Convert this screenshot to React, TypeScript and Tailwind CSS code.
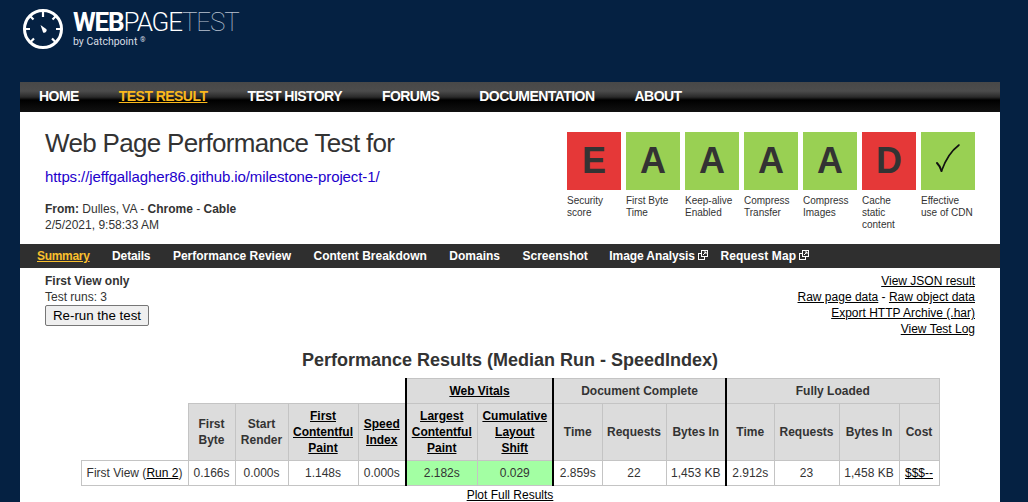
import { ReactNode } from 'react';

const grades = [
  { grade: 'E', label: ['Security', 'score'], color: 'bg-[#e53838]' },
  { grade: 'A', label: ['First Byte', 'Time'], color: 'bg-[#99d053]' },
  { grade: 'A', label: ['Keep-alive', 'Enabled'], color: 'bg-[#99d053]' },
  { grade: 'A', label: ['Compress', 'Transfer'], color: 'bg-[#99d053]' },
  { grade: 'A', label: ['Compress', 'Images'], color: 'bg-[#99d053]' },
  { grade: 'D', label: ['Cache', 'static', 'content'], color: 'bg-[#e53838]' },
  { grade: '✓', label: ['Effective', 'use of CDN'], color: 'bg-[#99d053]' },
];

function ExternalIcon() {
  return (
    <svg width="10" height="10" viewBox="0 0 10 10" fill="none" stroke="white" strokeWidth="1" className="ml-[3px] mb-[3px]">
      <rect x="0.5" y="3.5" width="6" height="6" />
      <rect x="3.5" y="0.5" width="6" height="6" fill="#2f2f2f" />
      <path d="M5 5 L8 2 M6 2 H8 V4" />
    </svg>
  );
}

function Gauge() {
  return (
    <svg width="42" height="42" viewBox="0 0 42 42" fill="none" stroke="white" strokeWidth="3">
      <circle cx="21" cy="21" r="18.5" />
      <path strokeWidth="2.2" d="M21 3v6M8 8l3.5 3.5M34 8l-3.5 3.5M3 21h5M34 21h5M8.5 34l3.5-3.5M33.5 34L30 30.5" />
      <path stroke="none" fill="white" d="M18.500 17l6 4.200a2.500 2.500 0 0 1-3.400 3.200z" />
    </svg>
  );
}

function Th({ children, className = '' }: { children: ReactNode; className?: string }) {
  return <th className={`border border-[#c4c4c4] bg-[#dcdcdc] p-0 text-center font-bold ${className}`}>{children}</th>;
}

function Td({ children, className = '' }: { children: ReactNode; className?: string }) {
  return <td className={`border border-[#c4c4c4] p-0 text-center ${className}`}>{children}</td>;
}

export default function App() {
  return (
    <div className="h-[502px] overflow-hidden bg-[#052142] font-['Liberation_Sans',Arial,sans-serif] text-[#333]">
      {/* Logo */}
      <div className="flex h-[82px] items-start pl-[22px] pt-[8px]">
        <Gauge />
        <div className="ml-[9px] text-white">
          <div className="mt-[1px] font-['Roboto',sans-serif] text-[26px] leading-[26px] tracking-[-1.15px]">
            <span className="font-bold">WEB</span>
            <span className="font-light">PAGE</span>
            <span className="font-thin text-[#b8c2d0]">TEST</span>
          </div>
          <div className="mt-[1px] font-['Roboto',sans-serif] text-[10.500px] leading-[12px] text-[#d8dde4]">
            by Catchpoint <sup className="text-[7px]">®</sup>
          </div>
        </div>
      </div>

      <div className="ml-[20px] w-[980px] bg-white">
        {/* Main nav */}
        <nav className="flex h-[30px] items-center gap-[40px] bg-[linear-gradient(#484848_0%,#4c4c4c_30%,#2a2a2a_50%,#000_60%,#111_100%)] pb-[2px] pl-[19px] text-[14px] font-bold tracking-[-0.55px] text-white">
          <a>HOME</a>
          <a className="text-[#fbb91c] underline">TEST RESULT</a>
          <a>TEST HISTORY</a>
          <a>FORUMS</a>
          <a>DOCUMENTATION</a>
          <a>ABOUT</a>
        </nav>

        {/* Title and grades */}
        <div className="flex h-[132px] justify-between px-[25px]">
          <div>
            <h1 className="mt-[15px] text-[26px] font-normal leading-[32px] tracking-[-0.68px]">Web Page Performance Test for</h1>
            <a className="mt-[8px] block text-[15px] leading-[20px] tracking-[-0.1px] text-[#2200cc]">https://jeffgallagher86.github.io/milestone-project-1/</a>
            <p className="mt-[14px] text-[12px] leading-[16px]">
              <b>From:</b> Dulles, VA - <b>Chrome</b> - <b>Cable</b>
            </p>
            <p className="text-[12px] leading-[16px]">2/5/2021, 9:58:33 AM</p>
          </div>
          <div className="mt-[20px] flex gap-[5px]">
            {grades.map((g, i) => (
              <div key={i} className="w-[54px]">
                <div className={`flex h-[58px] items-center justify-center text-[36px] font-bold text-[#333] ${g.color}`}>
                  {g.grade === '✓' ? (
                    <svg width="26" height="32" viewBox="0 0 26 32" fill="none" stroke="#111" strokeLinecap="round" className="mb-[5px]">
                      <path strokeWidth="2" d="M2 20c2 2 3.500 4 4.500 8" />
                      <path strokeWidth="1.600" d="M6.500 28C10 18 16 8 24 2" />
                    </svg>
                  ) : (
                    g.grade
                  )}
                </div>
                <div className="mt-[5px] text-[10px] leading-[12px]">
                  {g.label.map((l) => (
                    <div key={l}>{l}</div>
                  ))}
                </div>
              </div>
            ))}
          </div>
        </div>

        {/* Sub nav */}
        <div className="flex h-[24px] items-center gap-[22.500px] bg-[#2f2f2f] pl-[17px] text-[12px] font-bold text-white">
          <a className="tracking-[-0.3px] text-[#fbc02d] underline">Summary</a>
          <a className="tracking-[-0.15px]">Details</a>
          <a>Performance Review</a>
          <a>Content Breakdown</a>
          <a>Domains</a>
          <a>Screenshot</a>
          <a className="-ml-[1px] flex items-center tracking-[-0.1px]">Image Analysis<ExternalIcon /></a>
          <a className="-ml-[10px] flex items-center tracking-[0.1px]">Request Map<ExternalIcon /></a>
        </div>

        {/* Run info */}
        <div className="flex justify-between px-[25px] pt-[5px] text-[12px] leading-[16px]">
          <div>
            <p className="font-bold">First View only</p>
            <p>Test runs: 3</p>
            <button className="block h-[21px] w-[104px] rounded-[2px] border border-[#767676] bg-[#efefef] text-[13.333px] leading-[19px] text-black">Re-run the test</button>
          </div>
          <div className="text-right text-black">
            <p><a className="underline">View JSON result</a></p>
            <p><a className="underline">Raw page data</a> - <a className="underline">Raw object data</a></p>
            <p><a className="underline">Export HTTP Archive (.har)</a></p>
            <p><a className="underline">View Test Log</a></p>
          </div>
        </div>

        <h2 className="mt-[12px] text-center text-[18px] font-bold leading-[22px]">Performance Results (Median Run - SpeedIndex)</h2>

        {/* Results table */}
        <table className="mx-auto mt-[7px] table-fixed border-collapse text-[12px] leading-[16px]">
          <colgroup>
            <col className="w-[107px]" />
            <col className="w-[47px]" />
            <col className="w-[53px]" />
            <col className="w-[70px]" />
            <col className="w-[48px]" />
            <col className="w-[71px]" />
            <col className="w-[76px]" />
            <col className="w-[49px]" />
            <col className="w-[64px]" />
            <col className="w-[60px]" />
            <col className="w-[48px]" />
            <col className="w-[65px]" />
            <col className="w-[60px]" />
            <col className="w-[40px]" />
          </colgroup>
          <thead>
            <tr className="h-[25px]">
              <th colSpan={5} className="p-0" />
              <th colSpan={2} className="border border-[#c4c4c4] border-l-2 border-l-black bg-[#dcdcdc] p-0 font-bold"><span className="text-black underline">Web Vitals</span></th>
              <th colSpan={3} className="border border-[#c4c4c4] border-l-2 border-l-black bg-[#dcdcdc] p-0 font-bold">Document Complete</th>
              <th colSpan={4} className="border border-[#c4c4c4] border-l-2 border-l-black bg-[#dcdcdc] p-0 font-bold">Fully Loaded</th>
            </tr>
            <tr className="h-[57px]">
              <th className="p-0" />
              <Th>First<br />Byte</Th>
              <Th>Start<br />Render</Th>
              <Th><span className="text-black underline">First<br />Contentful<br />Paint</span></Th>
              <Th><span className="text-black underline">Speed<br />Index</span></Th>
              <Th className="border-l-2 border-l-black"><span className="text-black underline">Largest<br />Contentful<br />Paint</span></Th>
              <Th><span className="text-black underline">Cumulative<br />Layout<br />Shift</span></Th>
              <Th className="border-l-2 border-l-black">Time</Th>
              <Th>Requests</Th>
              <Th>Bytes In</Th>
              <Th className="border-l-2 border-l-black">Time</Th>
              <Th>Requests</Th>
              <Th>Bytes In</Th>
              <Th>Cost</Th>
            </tr>
          </thead>
          <tbody>
            <tr className="h-[25px]">
              <Td>First View (<span className="text-black underline">Run 2</span>)</Td>
              <Td>0.166s</Td>
              <Td>0.000s</Td>
              <Td>1.148s</Td>
              <Td>0.000s</Td>
              <Td className="border-l-2 border-l-black bg-[#a3ffa3]">2.182s</Td>
              <Td className="bg-[#a3ffa3]">0.029</Td>
              <Td className="border-l-2 border-l-black">2.859s</Td>
              <Td>22</Td>
              <Td>1,453 KB</Td>
              <Td className="border-l-2 border-l-black">2.912s</Td>
              <Td>23</Td>
              <Td>1,458 KB</Td>
              <Td><span className="text-black underline">$$$--</span></Td>
            </tr>
          </tbody>
        </table>
        <p className="mt-[1px] text-center text-[12px] leading-[16px] text-black underline">Plot Full Results</p>
      </div>
    </div>
  );
}
